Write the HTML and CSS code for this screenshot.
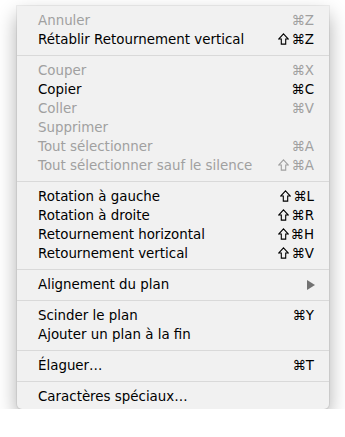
FILE: index.html
```html
<!DOCTYPE html>
<html lang="fr">
<head>
    <meta charset="UTF-8">
    <title>Menu Édition</title>
    <link rel="stylesheet" href="styles.css">
</head>
<body>
    <div class="menu">
        <div class="item disabled"><span>Annuler</span><span class="key">⌘Z</span></div>
        <div class="item"><span>Rétablir Retournement vertical</span><span class="key"><svg class="shift" viewBox="0 0 11 12"><path d="M5.5 0.9 L10.3 6 H7.7 V11.1 H3.3 V6 H0.7 Z"/></svg>⌘Z</span></div>
        <div class="sep"></div>
        <div class="item disabled"><span>Couper</span><span class="key">⌘X</span></div>
        <div class="item"><span>Copier</span><span class="key">⌘C</span></div>
        <div class="item disabled"><span>Coller</span><span class="key">⌘V</span></div>
        <div class="item disabled"><span>Supprimer</span></div>
        <div class="item disabled"><span>Tout sélectionner</span><span class="key">⌘A</span></div>
        <div class="item disabled"><span>Tout sélectionner sauf le silence</span><span class="key"><svg class="shift" viewBox="0 0 11 12"><path d="M5.5 0.9 L10.3 6 H7.7 V11.1 H3.3 V6 H0.7 Z"/></svg>⌘A</span></div>
        <div class="sep"></div>
        <div class="item"><span>Rotation à gauche</span><span class="key"><svg class="shift" viewBox="0 0 11 12"><path d="M5.5 0.9 L10.3 6 H7.7 V11.1 H3.3 V6 H0.7 Z"/></svg>⌘L</span></div>
        <div class="item"><span>Rotation à droite</span><span class="key"><svg class="shift" viewBox="0 0 11 12"><path d="M5.5 0.9 L10.3 6 H7.7 V11.1 H3.3 V6 H0.7 Z"/></svg>⌘R</span></div>
        <div class="item"><span>Retournement horizontal</span><span class="key"><svg class="shift" viewBox="0 0 11 12"><path d="M5.5 0.9 L10.3 6 H7.7 V11.1 H3.3 V6 H0.7 Z"/></svg>⌘H</span></div>
        <div class="item"><span>Retournement vertical</span><span class="key"><svg class="shift" viewBox="0 0 11 12"><path d="M5.5 0.9 L10.3 6 H7.7 V11.1 H3.3 V6 H0.7 Z"/></svg>⌘V</span></div>
        <div class="sep"></div>
        <div class="item"><span>Alignement du plan</span><span class="arrow"></span></div>
        <div class="sep"></div>
        <div class="item"><span>Scinder le plan</span><span class="key">⌘Y</span></div>
        <div class="item"><span>Ajouter un plan à la fin</span></div>
        <div class="sep"></div>
        <div class="item"><span>Élaguer…</span><span class="key">⌘T</span></div>
        <div class="sep"></div>
        <div class="item"><span>Caractères spéciaux…</span></div>
    </div>
</body>
</html>
```

FILE: styles.css
```css
body {
    margin: 0;
    padding: 6px 0 0 17px;
    background-color: #fff;
    font-family: "DejaVu Sans", sans-serif;
    font-size: 13.4px;
}

.menu {
    width: 312px;
    padding: 5px 0 3px;
    background-color: #f1f1f1;
    border-radius: 0 0 5px 5px;
    box-shadow: 0 9px 20px rgba(0, 0, 0, 0.33), 0 0 0 1px rgba(0, 0, 0, 0.06);
}

.item {
    height: 19px;
    display: flex;
    justify-content: space-between;
    align-items: center;
    padding: 0 15px 0 21px;
    color: #000;
}

.item.disabled {
    color: #a0a0a0;
}

.key {
    display: flex;
    align-items: center;
    gap: 2px;
}

.shift {
    width: 11px;
    height: 12px;
    fill: none;
    stroke: currentColor;
    stroke-width: 1.1;
    stroke-linejoin: miter;
    margin-top: -1px;
}

.arrow {
    width: 0;
    height: 0;
    border-top: 5px solid transparent;
    border-bottom: 5px solid transparent;
    border-left: 8px solid #727272;
    margin-right: -1px;
}

.sep {
    height: 12px;
    display: flex;
    align-items: center;
}

.sep::after {
    content: "";
    flex: 1;
    height: 1px;
    background-color: #d9d9d9;
}
```
